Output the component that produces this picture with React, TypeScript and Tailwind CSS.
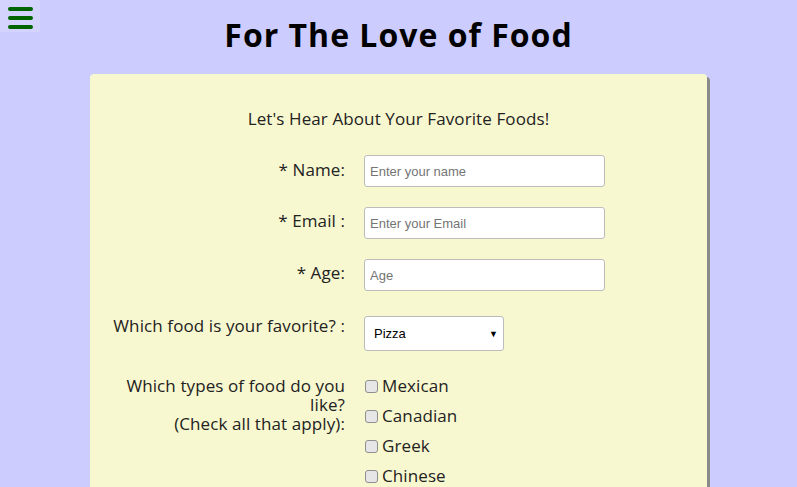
import { useState } from "react";

const foods = ["Mexican", "Canadian", "Greek", "Chinese"];

const TextRow = ({ label, placeholder, pad }: { label: string; placeholder: string; pad: string }) => (
  <div className="flex items-start">
    <label className={`w-[255px] shrink-0 text-right text-[17px] leading-5 ${pad}`}>{label}</label>
    <input
      type="text"
      placeholder={placeholder}
      className="ml-[19px] h-[32px] w-[241px] rounded-[3px] border border-[#bcbcbc] bg-white px-[5px] font-['Liberation_Sans',Arial,sans-serif] text-[13px] tracking-normal text-black placeholder:text-[#757575] outline-none"
    />
  </div>
);

export default function App() {
  const [fav, setFav] = useState("Pizza");

  return (
    <div className="relative min-h-[487px] bg-[#ccccff] font-['Open_Sans',sans-serif] tracking-[0.1px] text-[#222]">
      <button className="absolute left-0 top-0 flex h-[32px] w-[40px] flex-col items-start gap-[5px] bg-[#d3d3fd] pl-[8px] pt-[7px]">
        <span className="h-[4px] w-[25px] rounded-full bg-[#006400]" />
        <span className="h-[4px] w-[25px] rounded-full bg-[#006400]" />
        <span className="h-[4px] w-[25px] rounded-full bg-[#006400]" />
      </button>

      <h1 className="pt-[15px] text-center text-[32px] font-bold leading-10 tracking-[1px] text-black">For The Love of Food</h1>

      <div className="mx-auto mt-[19px] h-[500px] w-[617px] rounded-[4px] bg-[#f8f8d0] shadow-[3px_3px_0_#8a8a8a]">
        <p className="pt-[35px] text-center text-[17px] leading-5">Let's Hear About Your Favorite Foods!</p>

        <div className="mt-[26px] flex flex-col">
          <TextRow label="* Name:" placeholder="Enter your name" pad="pt-[5px]" />
          <div className="h-[20px]" />
          <TextRow label="* Email :" placeholder="Enter your Email" pad="pt-[4px]" />
          <div className="h-[20px]" />
          <TextRow label="* Age:" placeholder="Age" pad="pt-[4px]" />

          <div className="mt-[25px] flex items-start">
            <label className="w-[255px] shrink-0 pt-0 text-right text-[17px] leading-5">Which food is your favorite? :</label>
            <div className="relative ml-[19px]">
              <select
                value={fav}
                onChange={(e) => setFav(e.target.value)}
                className="h-[35px] w-[140px] appearance-none rounded-[3px] border border-[#bcbcbc] bg-white pl-[9px] font-['Liberation_Sans',Arial,sans-serif] text-[13px] tracking-normal text-black outline-none"
              >
                <option>Pizza</option>
                <option>Tacos</option>
                <option>Sushi</option>
                <option>Burgers</option>
              </select>
              <span className="pointer-events-none absolute right-[6px] top-[11px] text-[9px] text-black">▼</span>
            </div>
          </div>

          <div className="mt-[25px] flex items-start">
            <label className="w-[255px] shrink-0 pl-[20px] text-right text-[17px] leading-[19px]">
              Which types of food do you like?
              <br />
              (Check all that apply):
            </label>
            <div className="ml-[20px] flex flex-col gap-[10px]">
              {foods.map((f) => (
                <label key={f} className="flex h-5 items-center text-[17px] leading-5">
                  <input
                    type="checkbox"
                    className="mr-[4px] h-[13px] w-[13px] appearance-none rounded-[3px] border border-[#8f8f8f] bg-[#e6e6e6]"
                  />
                  {f}
                </label>
              ))}
            </div>
          </div>
        </div>
      </div>
    </div>
  );
}
